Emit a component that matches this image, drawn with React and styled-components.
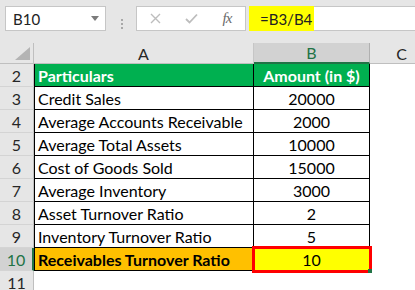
import React from 'react';
import styled, { createGlobalStyle, css } from 'styled-components';

const GlobalStyle = createGlobalStyle`
  html, body {
    margin: 0;
    padding: 0;
    background: #fff;
    overflow: hidden;
  }
  body {
    font-family: Lato, "Liberation Sans", sans-serif;
  }
`;

const Window = styled.div`
  width: 415px;
  height: 290px;
  overflow: hidden;
  background: #fff;
`;

const Toolbar = styled.div`
  display: flex;
  align-items: flex-start;
  height: 43px;
  box-sizing: border-box;
  padding: 6px 0 0 5px;
  background: #e6e6e6;
`;

const NameBox = styled.div`
  width: 101px;
  height: 25px;
  box-sizing: border-box;
  border: 1px solid #c6c6c6;
  background: #fff;
  display: flex;
  align-items: center;
  justify-content: space-between;
  padding: 0 6px 0 7px;
  font-size: 15px;
  color: #222;
`;

const Caret = styled.span`
  width: 0;
  height: 0;
  border-left: 4px solid transparent;
  border-right: 4px solid transparent;
  border-top: 5px solid #7b7b7b;
`;

const Grip = styled.div`
  display: flex;
  flex-direction: column;
  gap: 2px;
  margin: 13px 13px 0 15px;
`;

const Dot = styled.span`
  width: 2px;
  height: 2px;
  background: #a8a8a8;
`;

const FxBox = styled.div`
  width: 110px;
  height: 25px;
  box-sizing: border-box;
  border: 1px solid #c6c6c6;
  background: #fff;
  display: flex;
  align-items: center;
`;

const IconSlot = styled.span`
  width: 36px;
  display: flex;
  justify-content: center;
  align-items: center;
  color: #8a8a8a;
`;

const FxLabel = styled.span`
  font-family: "Liberation Serif", serif;
  font-style: italic;
  font-size: 15px;
  color: #6a6a6a;
  letter-spacing: -1px;
`;

const FormulaInput = styled.div`
  flex: 1;
  height: 25px;
  margin-left: 3px;
  box-sizing: border-box;
  border: 1px solid #c6c6c6;
  border-right: none;
  background: #fff;
  display: flex;
`;

const FormulaText = styled.div`
  width: 65px;
  margin: -1px 0 0 -1px;
  height: 25px;
  box-sizing: border-box;
  padding-left: 11px;
  display: flex;
  align-items: center;
  background: #ffff00;
  font-size: 15px;
  color: #222;
`;

const Sheet = styled.div`
  display: grid;
  grid-template-columns: 34px 220px 116px 64px;
  grid-template-rows: 21px repeat(10, 23px);
  font-size: 16px;
`;

const Corner = styled.div`
  background: #e6e6e6;
  border-right: 1px solid #bfbfbf;
  border-bottom: 1px solid #bfbfbf;
  box-sizing: border-box;
  display: flex;
  justify-content: flex-end;
  align-items: flex-end;
  padding: 0 3px 3px 0;
`;

const CornerTriangle = styled.span`
  width: 0;
  height: 0;
  border-left: 15px solid transparent;
  border-bottom: 13px solid #b4b4b4;
`;

const ColHeader = styled.div`
  background: #e6e6e6;
  border-right: 1px solid #c6c6c6;
  border-bottom: 1px solid #bfbfbf;
  box-sizing: border-box;
  display: flex;
  align-items: center;
  justify-content: center;
  color: #262626;
  ${(p) =>
    p.$active &&
    css`
      background: #d2d2d2;
      color: #217346;
      border-right-color: #b0b0b0;
      border-bottom: 2px solid #217346;
    `}
`;

const RowHeader = styled.div`
  background: #e6e6e6;
  border-right: 1px solid #bfbfbf;
  border-bottom: 1px solid #d4d4d4;
  box-sizing: border-box;
  display: flex;
  align-items: center;
  justify-content: center;
  color: #262626;
  ${(p) =>
    p.$active &&
    css`
      background: #d2d2d2;
      color: #217346;
      border-right: 2px solid #217346;
    `}
`;

const Cell = styled.div`
  box-sizing: border-box;
  display: flex;
  align-items: center;
  padding: 0 3px;
  white-space: nowrap;
  overflow: visible;
  color: #000;
  background: ${(p) => p.$bg || '#fff'};
  justify-content: ${(p) => (p.$center ? 'center' : 'flex-start')};
  font-weight: ${(p) => (p.$bold ? 700 : 400)};
  ${(p) => p.$light && 'color: #fff;'}
  ${(p) =>
    p.$boxed &&
    css`
      border-right: 1px solid #000;
      border-bottom: 1px solid #000;
    `}
  ${(p) => p.$first && 'border-left: 1px solid #000;'}
  ${(p) =>
    p.$selected &&
    css`
      position: relative;
      z-index: 1;
      outline: 3px solid #ff0000;
      outline-offset: -1px;
      &::after {
        content: '';
        position: absolute;
        right: -3px;
        bottom: -3px;
        width: 4px;
        height: 4px;
        background: #217346;
      }
    `}
`;

const rows = [
  { n: 2, label: 'Particulars', value: 'Amount (in $)', kind: 'head' },
  { n: 3, label: 'Credit Sales', value: '20000' },
  { n: 4, label: 'Average Accounts Receivable', value: '2000' },
  { n: 5, label: 'Average Total Assets', value: '10000' },
  { n: 6, label: 'Cost of Goods Sold', value: '15000' },
  { n: 7, label: 'Average Inventory', value: '3000' },
  { n: 8, label: 'Asset Turnover Ratio', value: '2' },
  { n: 9, label: 'Inventory Turnover Ratio', value: '5' },
  { n: 10, label: 'Receivables Turnover Ratio', value: '10', kind: 'result' },
];

const CrossIcon = () => (
  <svg width="11" height="11" viewBox="0 0 11 11">
    <path d="M1 1 L10 10 M10 1 L1 10" stroke="#bdbdbd" strokeWidth="1.4" fill="none" />
  </svg>
);

const CheckIcon = () => (
  <svg width="13" height="11" viewBox="0 0 13 11">
    <path d="M1 6 L4.5 9.5 L12 1.5" stroke="#bdbdbd" strokeWidth="1.8" fill="none" />
  </svg>
);

const App = () => {
  return (
    <Window>
      <GlobalStyle />
      <Toolbar>
        <NameBox>
          B10
          <Caret />
        </NameBox>
        <Grip>
          <Dot />
          <Dot />
          <Dot />
        </Grip>
        <FxBox>
          <IconSlot>
            <CrossIcon />
          </IconSlot>
          <IconSlot>
            <CheckIcon />
          </IconSlot>
          <IconSlot>
            <FxLabel>fx</FxLabel>
          </IconSlot>
        </FxBox>
        <FormulaInput>
          <FormulaText>=B3/B4</FormulaText>
        </FormulaInput>
      </Toolbar>

      <Sheet>
        <Corner>
          <CornerTriangle />
        </Corner>
        <ColHeader>A</ColHeader>
        <ColHeader $active>B</ColHeader>
        <ColHeader>C</ColHeader>

        {rows.map((r) => {
          const head = r.kind === 'head';
          const result = r.kind === 'result';
          return (
            <React.Fragment key={r.n}>
              <RowHeader $active={result}>{r.n}</RowHeader>
              <Cell
                $boxed
                $first
                $bold={head || result}
                $light={head}
                $bg={head ? '#00b050' : result ? '#ffc000' : undefined}
              >
                {r.label}
              </Cell>
              <Cell
                $boxed
                $center
                $bold={head}
                $light={head}
                $selected={result}
                $bg={head ? '#00b050' : result ? '#ffff00' : undefined}
              >
                {r.value}
              </Cell>
              <Cell />
            </React.Fragment>
          );
        })}

        <RowHeader>11</RowHeader>
        <Cell />
        <Cell />
        <Cell />
      </Sheet>
    </Window>
  );
};

export default App;
